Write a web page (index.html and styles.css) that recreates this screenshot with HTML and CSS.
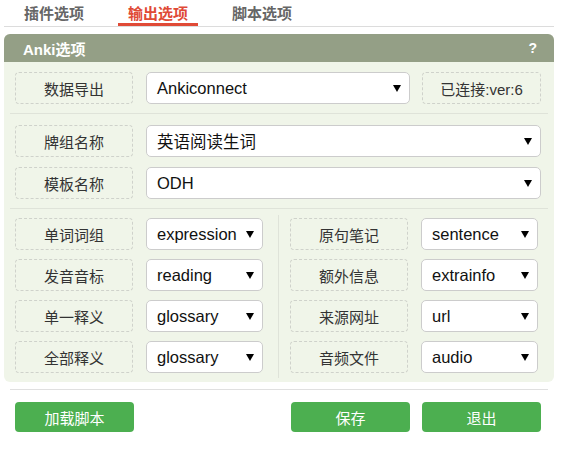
FILE: index.html
```html
<!DOCTYPE html>
<html lang="zh-CN">
<head>
<meta charset="utf-8">
<title>Anki选项</title>
<link rel="stylesheet" href="styles.css">
</head>
<body>
<nav class="tabs">
  <a class="tab">插件选项</a>
  <a class="tab active">输出选项</a>
  <a class="tab">脚本选项</a>
</nav>

<section class="panel">
  <header class="panel-head">
    <span class="panel-title">Anki选项</span>
    <span class="panel-help">?</span>
  </header>
  <div class="panel-body">
    <div class="sec sec-export">
      <div class="row">
        <div class="label">数据导出</div>
        <div class="select sel-mid"><span class="val">Ankiconnect</span><i class="caret"></i></div>
        <div class="label status">已连接:ver:6</div>
      </div>
    </div>
    <div class="sec sec-deck">
      <div class="row">
        <div class="label">牌组名称</div>
        <div class="select sel-full"><span class="val">英语阅读生词</span><i class="caret"></i></div>
      </div>
      <div class="row">
        <div class="label">模板名称</div>
        <div class="select sel-full"><span class="val">ODH</span><i class="caret"></i></div>
      </div>
    </div>
    <div class="sec sec-fields">
      <div class="col col-left">
        <div class="row"><div class="label">单词词组</div><div class="select sel-small"><span class="val">expression</span><i class="caret"></i></div></div>
        <div class="row"><div class="label">发音音标</div><div class="select sel-small"><span class="val">reading</span><i class="caret"></i></div></div>
        <div class="row"><div class="label">单一释义</div><div class="select sel-small"><span class="val">glossary</span><i class="caret"></i></div></div>
        <div class="row"><div class="label">全部释义</div><div class="select sel-small"><span class="val">glossary</span><i class="caret"></i></div></div>
      </div>
      <div class="col col-right">
        <div class="row"><div class="label">原句笔记</div><div class="select sel-small"><span class="val">sentence</span><i class="caret"></i></div></div>
        <div class="row"><div class="label">额外信息</div><div class="select sel-small"><span class="val">extrainfo</span><i class="caret"></i></div></div>
        <div class="row"><div class="label">来源网址</div><div class="select sel-small"><span class="val">url</span><i class="caret"></i></div></div>
        <div class="row"><div class="label">音频文件</div><div class="select sel-small"><span class="val">audio</span><i class="caret"></i></div></div>
      </div>
    </div>
  </div>
</section>

<hr class="divider">

<div class="actions">
  <button class="btn">加载脚本</button>
  <button class="btn btn-save">保存</button>
  <button class="btn">退出</button>
</div>
</body>
</html>
```

FILE: styles.css
```css
* { box-sizing: border-box; }

body {
  margin: 0;
  font-family: "Liberation Sans", "Noto Sans CJK SC", sans-serif;
  color: #333;
  background: #fff;
}

/* tabs */
.tabs {
  display: flex;
  gap: 24px;
  height: 27px;
  margin: 0 12px 0 4px;
  padding-left: 10px;
  border-bottom: 1px solid #dcdcdc;
}
.tab {
  width: 80px;
  height: 26px;
  padding-top: 6px;
  text-align: center;
  font-size: 15px;
  line-height: 15px;
  font-weight: bold;
  color: #666;
}
.tab.active {
  color: #e04a36;
  border-bottom: 3px solid #e04a36;
}

/* panel */
.panel {
  margin: 7px 12px 0 4px;
  border-radius: 6px;
  overflow: hidden;
  background: #f0f5e9;
}
.panel-head {
  height: 28px;
  padding: 0 17px 0 19px;
  display: flex;
  align-items: center;
  justify-content: space-between;
  background: #949f86;
  color: #fff;
  font-weight: bold;
  font-size: 15px;
}
.panel-help { font-size: 14px; }
.panel-body {
  padding: 0 6px;
}

.sec-export {
  padding: 10px 7px 9px 5px;
  border-bottom: 1px solid #dfe3d9;
}
.sec-deck {
  padding: 11px 7px 9px 5px;
  border-bottom: 1px solid #dfe3d9;
  display: flex;
  flex-direction: column;
  gap: 10px;
}
.sec-fields {
  padding: 6px 0 4px 5px;
  display: grid;
  grid-template-columns: 263px 1fr;
}
.col {
  display: flex;
  flex-direction: column;
  gap: 9px;
  padding: 3px 0 5px;
}
.col-right {
  border-left: 1px solid #dfe3d9;
  padding-left: 11px;
}

.row {
  display: flex;
  height: 32px;
}

.label {
  width: 118px;
  flex: none;
  border: 1px dashed #cfd2cb;
  border-radius: 4px;
  display: flex;
  align-items: center;
  justify-content: center;
  font-size: 15px;
  color: #333;
}
.status {
  width: 119px;
  margin-left: 12px;
}

.select {
  margin-left: 13px;
  background: #fff;
  border: 1px solid #cccccc;
  border-radius: 5px;
  display: flex;
  align-items: center;
  justify-content: space-between;
  padding: 0 8px 0 10px;
  font-size: 16.5px;
  color: #111;
  overflow: hidden;
}
.sel-mid { width: 264px; }
.sel-full { flex: 1; }
.sel-small { width: 117px; }
.val { white-space: nowrap; }
.caret {
  flex: none;
  width: 0;
  height: 0;
  border-left: 4px solid transparent;
  border-right: 4px solid transparent;
  border-top: 7px solid #000;
}

/* bottom */
.divider {
  margin: 7px 18px 0 10px;
  border: 0;
  border-top: 1px solid #e0e0e0;
  height: 0;
}
.actions {
  display: flex;
  gap: 12px;
  padding: 0 25px 0 15px;
  margin-top: 12px;
}
.btn {
  width: 119px;
  height: 30px;
  border: 0;
  border-radius: 4px;
  background: #4caf50;
  color: #fff;
  font-family: "Liberation Sans", "Noto Sans CJK SC", sans-serif;
  font-size: 15px;
  padding: 0;
}
.btn-save { margin-left: auto; }
```
